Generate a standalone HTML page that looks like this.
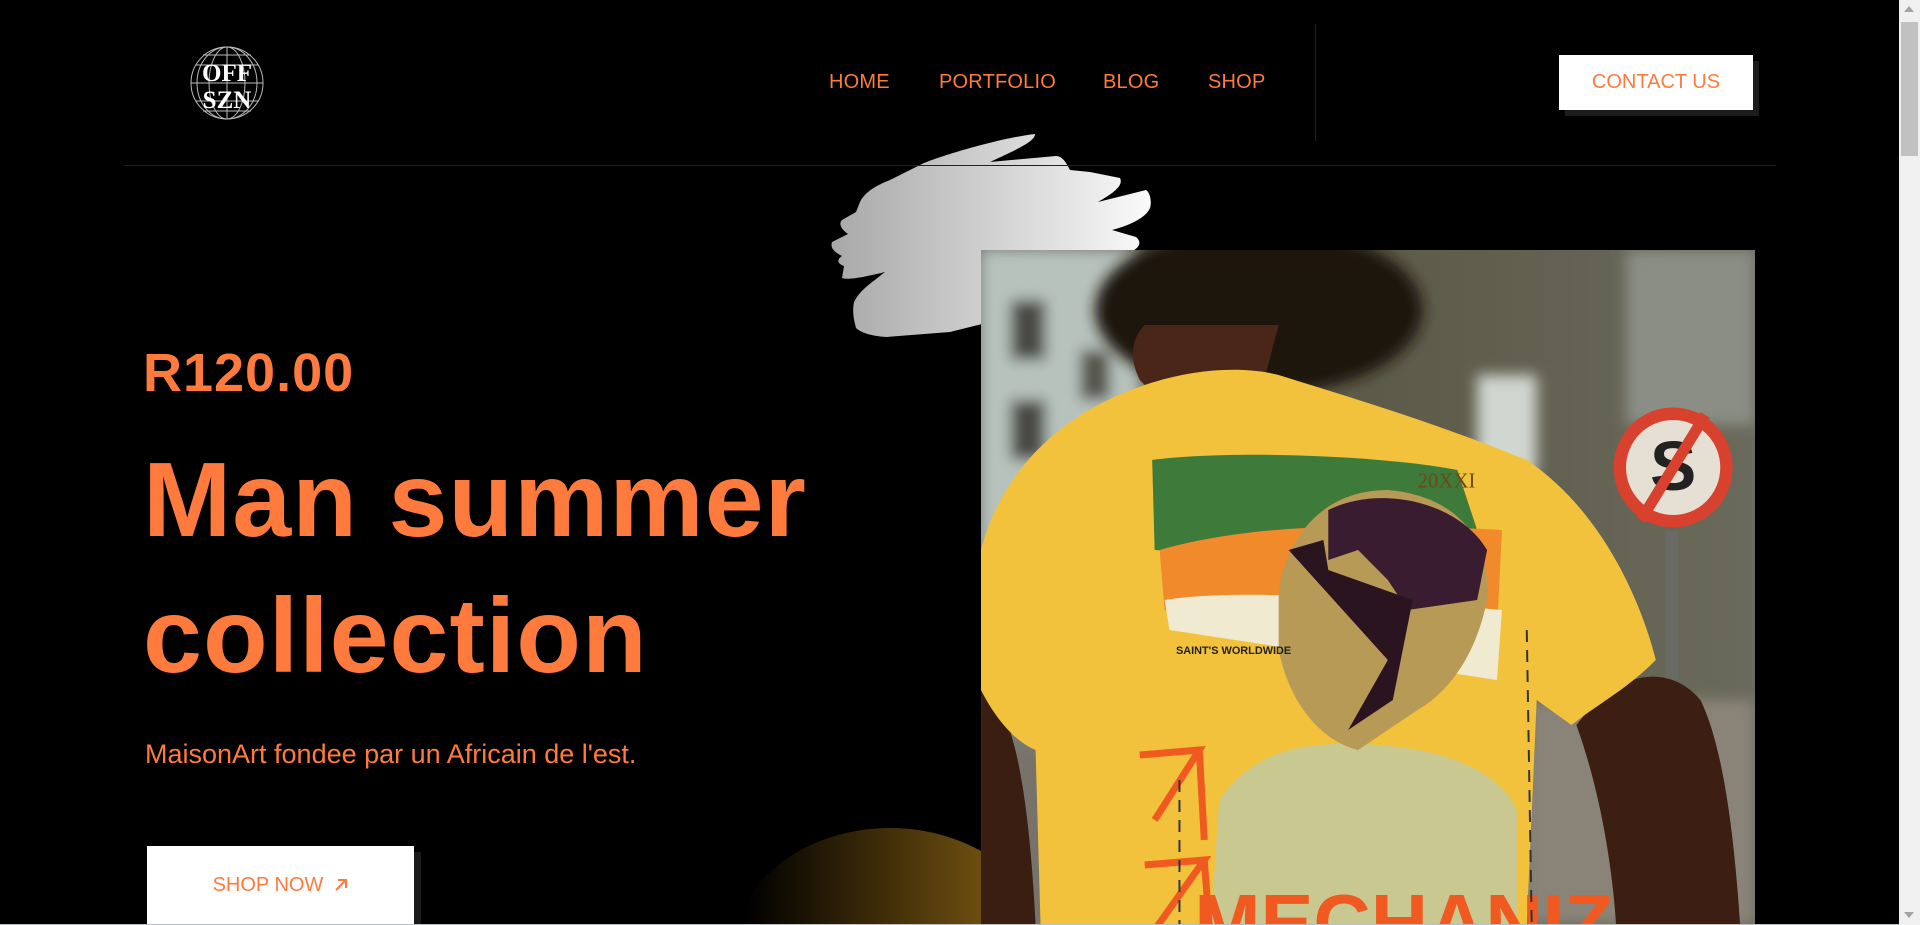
<!DOCTYPE html>
<html><head><meta charset="utf-8"><style>
*{margin:0;padding:0;box-sizing:border-box}
html,body{width:1920px;height:925px;overflow:hidden;background:#000;font-family:"Liberation Sans",sans-serif}
#wrap{position:relative;width:1920px;height:925px;overflow:hidden;background:#000}
.abs{position:absolute}
.nav a{position:absolute;top:71px;color:#ff7a3d;font-size:20px;text-decoration:none;font-weight:500;letter-spacing:0.2px}
.orange{color:#ff7a3d}
</style></head><body><div id="wrap">
<svg class="abs" style="left:189px;top:45px" width="76" height="76" viewBox="0 0 76 76">
<g fill="none" stroke="#bbb" stroke-width="1">
<circle cx="38" cy="38" r="36"/>
<ellipse cx="38" cy="38" rx="18" ry="36"/>
<ellipse cx="38" cy="38" rx="30" ry="36"/>
<line x1="38" y1="2" x2="38" y2="74"/>
<line x1="2" y1="38" x2="74" y2="38"/>
<path d="M7 20H69M7 56H69M14 10H62M14 66H62"/>
</g>
<text x="38" y="36" text-anchor="middle" fill="#fff" font-family="Liberation Serif" font-size="25" font-weight="bold">OFF</text>
<text x="38" y="63" text-anchor="middle" fill="#fff" font-family="Liberation Serif" font-size="25" font-weight="bold">SZN</text>
</svg>
<div class="nav">
<a style="left:829px">HOME</a>
<a style="left:939px">PORTFOLIO</a>
<a style="left:1103px">BLOG</a>
<a style="left:1208px">SHOP</a>
</div>
<div class="abs" style="left:1315px;top:24px;width:1px;height:117px;background:#222"></div>
<div class="abs" style="left:1565px;top:61px;width:194px;height:55px;background:#1c1c1c"></div>
<div class="abs" style="left:1559px;top:55px;width:194px;height:55px;background:#fff;color:#ff7a3d;font-size:20px;font-weight:500;text-align:center;line-height:55px">CONTACT US</div>

<svg class="abs" style="left:830px;top:132px" width="322" height="206" viewBox="0 0 322 206">
<defs><linearGradient id="g1" x1="0" x2="1"><stop offset="0" stop-color="#a8a8a8"/><stop offset="1" stop-color="#fafafa"/></linearGradient></defs>
<path fill="url(#g1)" d="M205 2C170 6 110 24 92 32 L60 48 C45 54 35 60 30 70 L26 80 L12 88 C8 92 12 98 18 102 L2 110 C0 116 4 120 12 124 C6 128 8 132 14 134 L12 146 C18 148 30 146 55 140 C40 152 30 158 24 170 C22 180 24 188 26 196 C30 200 40 204 56 205 L120 200 L160 190 L195 170 L250 150 L300 120 C310 116 312 110 306 105 L282 98 C298 94 316 86 320 76 C322 70 320 60 316 58 L268 70 C282 62 294 54 290 46 L260 40 L240 38 C236 30 232 24 226 24 L160 30 C185 18 205 10 205 2Z"/>
</svg>
<div class="abs" style="left:125px;top:165px;width:1651px;height:1px;background:#222"></div>

<div class="abs orange" style="left:143px;top:342px;font-size:54px;font-weight:bold;letter-spacing:1px">R120.00</div>
<div class="abs orange" style="left:143px;top:432px;font-size:106px;font-weight:bold;line-height:136px;letter-spacing:1px">Man summer<br>collection</div>
<div class="abs orange" style="left:145px;top:739px;font-size:27px">MaisonArt fondee par un Africain de l'est.</div>

<div class="abs" style="left:730px;top:828px;width:320px;height:260px;border-radius:50%;background:linear-gradient(90deg,#000 5%,#6e4f10 80%)"></div>

<div class="abs" style="left:153px;top:852px;width:268px;height:80px;background:#1a1a1a"></div>
<div class="abs" style="left:147px;top:846px;width:267px;height:80px;background:#fff;color:#ff7a3d;font-size:20px;padding-top:28px;text-align:center">SHOP NOW &nbsp;<svg width="14" height="14" viewBox="0 0 14 14" style="vertical-align:-1px"><path d="M2 12L12 2M4 2H12V10" stroke="#ff7a3d" stroke-width="2" fill="none"/></svg></div>

<svg class="abs" style="left:981px;top:250px" width="774" height="675" viewBox="0 0 1560 1350" preserveAspectRatio="none">
<defs>
<linearGradient id="bg" x1="0" x2="1"><stop offset="0" stop-color="#7a7e78"/><stop offset="0.5" stop-color="#5c5a48"/><stop offset="1" stop-color="#6a6a5c"/></linearGradient>
<filter id="b"><feGaussianBlur stdDeviation="14"/></filter>
</defs>
<rect width="1560" height="1350" fill="url(#bg)"/>
<g filter="url(#b)">
<rect x="0" y="0" width="320" height="900" fill="#b8c2bd"/>
<rect x="60" y="100" width="70" height="120" fill="#4a4a44"/>
<rect x="60" y="300" width="70" height="120" fill="#4a4a44"/>
<rect x="200" y="200" width="60" height="100" fill="#55554c"/>
<rect x="1000" y="250" width="120" height="200" fill="#d0d6d0"/>
<rect x="1300" y="0" width="260" height="350" fill="#8a8e84"/>
<rect x="0" y="1000" width="1560" height="350" fill="#77726a"/>
<rect x="1100" y="900" width="460" height="450" fill="#8a8478"/>
</g>
<circle cx="1395" cy="435" r="120" fill="#d8412e"/>
<circle cx="1395" cy="435" r="95" fill="#e6e0d4"/>
<text x="1395" y="480" text-anchor="middle" font-size="140" font-weight="bold" fill="#222" font-family="Liberation Sans">S</text>
<path d="M1460 330 L1330 540" stroke="#d8412e" stroke-width="22"/>
<rect x="1380" y="560" width="26" height="300" fill="#6a6a64"/>
<path d="M0 870 C40 900 90 960 110 1350 L0 1350Z" fill="#3a1e12"/>
<path d="M1200 950 C1300 820 1400 840 1450 900 C1500 1000 1520 1200 1530 1350 L1280 1350 C1270 1200 1240 1060 1200 950Z" fill="#3c1f12"/>
<ellipse cx="560" cy="120" rx="330" ry="170" fill="#1e120c" filter="url(#b)"/>
<path d="M330 150 C300 180 300 220 320 260 L360 300 L560 300 L600 150Z" fill="#4a2618"/>
<path d="M330 270 C420 240 520 230 600 250 C760 300 900 340 1100 420 C1250 520 1330 700 1360 820 C1300 880 1240 910 1190 950 L1120 900 L1100 1350 L120 1350 L110 1000 C60 980 20 920 0 880 L0 600 C40 450 150 330 330 270Z" fill="#f2c23c"/>
<path d="M345 420 C500 400 800 410 960 440 L1000 560 C900 600 700 620 350 600Z" fill="#3e7a3a"/>
<path d="M360 600 C500 560 700 540 1050 560 L1040 760 C800 780 500 760 370 720Z" fill="#f08a2a"/>
<path d="M370 700 C500 680 700 690 1050 720 L1040 860 L380 760Z" fill="#f0ead0"/>
<path d="M480 1100 C550 1000 650 980 800 990 C950 1000 1050 1050 1080 1120 L1080 1400 L460 1400Z" fill="#c8c890"/>
<path d="M600 680 C620 560 700 480 820 480 C940 490 1030 560 1020 700 C1000 800 950 880 880 920 L760 1000 C680 980 620 900 600 800Z" fill="#b79a55"/>
<path d="M700 520 C800 470 960 500 1020 600 L1000 700 L860 720 L820 660 L760 600 L700 620Z" fill="#3a1c30"/>
<path d="M620 600 L690 580 L700 640 L870 700 L830 900 L740 960 L820 820Z" fill="#2a1420"/>
<text x="393" y="808" font-size="22" font-weight="bold" fill="#222" font-family="Liberation Sans">SAINT'S WORLDWIDE</text>
<text x="880" y="475" font-size="42" fill="#6a4a1a" font-family="Liberation Serif">20XXI</text>
<path d="M320 1010 L440 1000 L350 1140 M440 1000 L450 1180 M330 1230 L450 1220 L350 1360 M450 1220 L460 1350" stroke="#f05a20" stroke-width="14" fill="none"/>
<text x="430" y="1400" font-size="160" font-weight="bold" fill="#f05a20" font-family="Liberation Sans">MECHANIZ</text>
<path d="M400 1060 L400 1350 M1100 760 L1110 1350" stroke="#333" stroke-width="4" stroke-dasharray="24 16"/>
</svg>
<div class="abs" style="left:1899px;top:0;width:21px;height:925px;background:#f0f0f0"></div>
<div class="abs" style="left:1901px;top:22px;width:17px;height:134px;background:#c1c1c1"></div>
<div class="abs" style="left:1904px;top:6px;width:0;height:0;border-left:5px solid transparent;border-right:5px solid transparent;border-bottom:6px solid #a3a3a3"></div>
<div class="abs" style="left:1904px;top:912px;width:0;height:0;border-left:5px solid transparent;border-right:5px solid transparent;border-top:6px solid #a3a3a3"></div>
<div class="abs" style="left:0;top:924px;width:1899px;height:1px;background:#b8c0c4"></div>
</div></body></html>
